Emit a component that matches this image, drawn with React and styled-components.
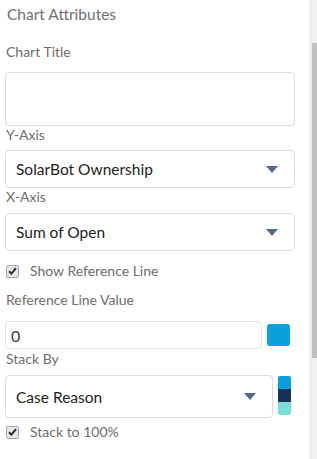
import styled, { createGlobalStyle } from "styled-components";

const GlobalStyle = createGlobalStyle`
  html, body {
    margin: 0;
    padding: 0;
    background: #ffffff;
  }
  body {
    font-family: "Lato", "Liberation Sans", sans-serif;
  }
`;

const Frame = styled.div`
  display: flex;
  width: 317px;
  height: 459px;
  overflow: hidden;
`;

const Panel = styled.div`
  width: 309px;
  box-sizing: border-box;
  padding: 0 14px 0 5px;
  display: flex;
  flex-direction: column;
`;

const ScrollTrack = styled.div`
  width: 8px;
  background: #f1f1f1;
  display: flex;
  justify-content: flex-end;
`;

const ScrollThumb = styled.div`
  width: 5px;
  height: 315px;
  margin-top: 43px;
  background: #c1c1c1;
`;

const Title = styled.div`
  margin: 4px 0 0 2px;
  font-size: 15.5px;
  line-height: 20px;
  color: #6f6f6f;
`;

const Label = styled.div`
  margin-top: ${(p) => p.$top}px;
  margin-left: 1px;
  font-size: 14px;
  line-height: 18px;
  color: #6d6d6d;
`;

const TextArea = styled.div`
  margin-top: 11px;
  height: 54px;
  border: 1px solid #dcdcdc;
  border-radius: 4px;
  box-sizing: border-box;
`;

const Select = styled.div`
  height: ${(p) => p.$height}px;
  flex: 1;
  box-sizing: border-box;
  border: 1px solid #dcdcdc;
  border-radius: 4px;
  display: flex;
  align-items: center;
  justify-content: space-between;
  padding: 0 16px 0 10px;
  font-size: 15.5px;
  color: #222222;
`;

const Arrow = styled.span`
  width: 0;
  height: 0;
  border-left: 6px solid transparent;
  border-right: 6px solid transparent;
  border-top: 7px solid #54698d;
`;

const CheckRow = styled.div`
  margin-top: ${(p) => p.$top}px;
  display: flex;
  align-items: center;
  gap: 11px;
  font-size: 14px;
  line-height: 18px;
  color: #6d6d6d;
`;

const Box = styled.span`
  width: 11px;
  height: 11px;
  margin-left: 1px;
  border: 1px solid #a8a8a8;
  border-radius: 2px;
  background: #e6e6e6;
  display: flex;
  align-items: center;
  justify-content: center;
  box-sizing: content-box;
`;

const Row = styled.div`
  margin-top: ${(p) => p.$top}px;
  width: ${(p) => p.$width || 290}px;
  display: flex;
  align-items: ${(p) => p.$align || "center"};
  gap: 5px;
`;

const Input = styled.div`
  width: 257px;
  height: 28px;
  box-sizing: border-box;
  border: 1px solid #e3e3e3;
  border-radius: 4px;
  padding-left: 5px;
  display: flex;
  align-items: center;
  font-size: 16px;
  color: #3a3a3a;
`;

const Swatch = styled.div`
  width: 23px;
  height: 22px;
  border-radius: 3px;
  background: #0aa0dd;
`;

const StackSwatch = styled.div`
  width: 13px;
  flex-shrink: 0;
  margin-top: 1px;
  display: flex;
  flex-direction: column;
  border-radius: 2px;
  overflow: hidden;
`;

const Segment = styled.div`
  height: 13px;
  background: ${(p) => p.$color};
`;

const Check = ({ children, top }) => (
  <CheckRow $top={top}>
    <Box>
      <svg width="9" height="8" viewBox="0 0 9 8">
        <path d="M1 4.2 L3.4 6.6 L8 1.2" fill="none" stroke="#2b2b2b" strokeWidth="2" />
      </svg>
    </Box>
    <span>{children}</span>
  </CheckRow>
);

export default function App() {
  return (
    <>
      <GlobalStyle />
      <Frame>
        <Panel>
          <Title>Chart Attributes</Title>
          <Label $top={19}>Chart Title</Label>
          <TextArea />
          <Label $top={0}>Y-Axis</Label>
          <Row $top={6}>
            <Select $height={38}>
              SolarBot Ownership
              <Arrow />
            </Select>
          </Row>
          <Label $top={0}>X-Axis</Label>
          <Row $top={7}>
            <Select $height={38}>
              Sum of Open
              <Arrow />
            </Select>
          </Row>
          <Check top={11}>Show Reference Line</Check>
          <Label $top={11}>Reference Line Value</Label>
          <Row $top={12}>
            <Input>0</Input>
            <Swatch />
          </Row>
          <Label $top={1}>Stack By</Label>
          <Row $top={7} $width={286} $align="flex-start">
            <Select $height={43}>
              Case Reason
              <Arrow />
            </Select>
            <StackSwatch>
              <Segment $color="#0b9fdb" />
              <Segment $color="#16325c" />
              <Segment $color="#7adcd8" />
            </StackSwatch>
          </Row>
          <Check top={5}>Stack to 100%</Check>
        </Panel>
        <ScrollTrack>
          <ScrollThumb />
        </ScrollTrack>
      </Frame>
    </>
  );
}
